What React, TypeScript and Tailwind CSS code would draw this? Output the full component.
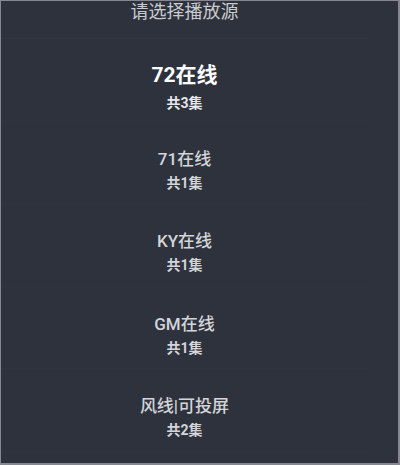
import React from "react";

type Source = { name: string; count: number };

const sources: Source[] = [
  { name: "72在线", count: 3 },
  { name: "71在线", count: 1 },
  { name: "KY在线", count: 1 },
  { name: "GM在线", count: 1 },
  { name: "风线|可投屏", count: 2 },
];

export default function App() {
  const active = 0;
  return (
    <div
      className="w-[400px] h-[465px] overflow-hidden bg-[#2e323d] border-t border-l border-r-2 border-b-2 border-[#858891]"
      style={{ fontFamily: 'Roboto, "Noto Sans CJK SC", sans-serif' }}
    >
      <div className="pr-[30px]">
        <div className="h-[38px] border-b border-[#31353f] flex justify-center">
          <div className="text-[18px] leading-[24px] text-[#c9cbcf] -mt-[1px]">请选择播放源</div>
        </div>
        {sources.map((s, i) => (
          <div key={s.name} className="h-[82.6px] flex flex-col items-center border-b border-[#30343f]">
            {i === active ? (
              <>
                <div className="pt-[23px] text-[21px] leading-[27px] font-bold text-white">{s.name}</div>
                <div className="mt-[5px] text-[14px] leading-[19px] font-bold text-[#e6e7ea]">共{s.count}集</div>
              </>
            ) : (
              <>
                <div className="pt-[25px] text-[17px] leading-[24px] font-medium text-[#d3d5d9]">{s.name}</div>
                <div className="mt-[3px] text-[14px] leading-[19px] font-bold text-[#d3d5d9]">共{s.count}集</div>
              </>
            )}
          </div>
        ))}
      </div>
    </div>
  );
}
